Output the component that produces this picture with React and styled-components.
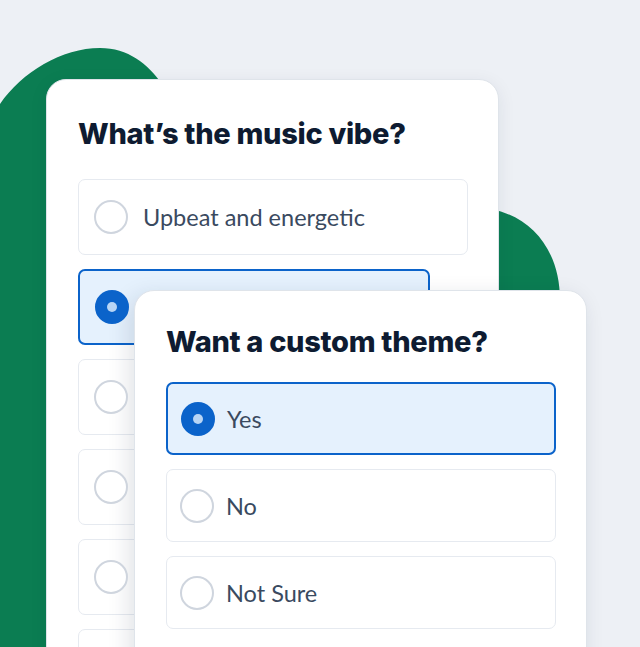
import React from "react";
import styled, { createGlobalStyle } from "styled-components";

const GlobalStyle = createGlobalStyle`
  body {
    margin: 0;
    background: #edf0f5;
  }
`;

const vibeOptions = [
  { label: "Upbeat and energetic" },
  { label: "Chill and relaxed", selected: true, narrow: true },
  { label: "Romantic and soft" },
  { label: "Classic hits" },
  { label: "Party all night" },
  { label: "Something else" },
];

const themeOptions = [
  { label: "Yes", selected: true },
  { label: "No" },
  { label: "Not Sure" },
];

const App = () => (
  <>
    <GlobalStyle />
    <Stage>
      <Blob viewBox="0 0 640 647" aria-hidden="true">
        <path d="M0 104 C22 72 62 48 100 48 C128 48 148 64 162 84 L470 207 C525 207 560 245 560 300 L560 647 L0 647 Z" />
      </Blob>
      <Stack>
        <Card $top={79} $left={46} $padTop={37}>
          <Title>What’s the music vibe?</Title>
          <Options $mt={28}>
            {vibeOptions.map((opt) => (
              <Option key={opt.label} $selected={opt.selected} $narrow={opt.narrow} $h={76} $pad={15} $gap={15}>
                <Radio $selected={opt.selected} />
                <Label>{opt.label}</Label>
              </Option>
            ))}
          </Options>
        </Card>
        <Card $top={290} $left={134} $padTop={34} $front>
          <Title>Want a custom theme?</Title>
          <Options $mt={23}>
            {themeOptions.map((opt) => (
              <Option key={opt.label} $selected={opt.selected} $h={73} $pad={13} $gap={12}>
                <Radio $selected={opt.selected} />
                <Label>{opt.label}</Label>
              </Option>
            ))}
          </Options>
        </Card>
      </Stack>
    </Stage>
  </>
);

const Stage = styled.div`
  position: relative;
  width: 640px;
  height: 647px;
  overflow: hidden;
  background: #edf0f5;
`;

const Blob = styled.svg`
  position: absolute;
  inset: 0;
  width: 640px;
  height: 647px;
  fill: #0b7d52;
`;

const Stack = styled.div`
  position: relative;
  display: grid;
  grid-template-areas: "stack";
`;

const Card = styled.div`
  grid-area: stack;
  box-sizing: border-box;
  width: 453px;
  min-height: 600px;
  margin: ${(p) => p.$top}px 0 0 ${(p) => p.$left}px;
  padding: ${(p) => p.$padTop}px 30px 0 31px;
  background: #fff;
  border: 1px solid #dfe4ea;
  border-radius: 20px;
  box-shadow: ${(p) =>
    p.$front
      ? "-5px 6px 22px rgba(20, 35, 65, 0.13)"
      : "0 4px 18px rgba(20, 35, 65, 0.08)"};
`;

const Title = styled.h2`
  margin: 0;
  font-family: Inter, "Liberation Sans", sans-serif;
  font-weight: 800;
  font-size: 29px;
  line-height: 34px;
  letter-spacing: -0.3px;
  color: #0e1b31;
  white-space: nowrap;
`;

const Options = styled.div`
  display: flex;
  flex-direction: column;
  gap: 14px;
  margin-top: ${(p) => p.$mt}px;
`;

const Option = styled.div`
  box-sizing: border-box;
  display: flex;
  align-items: center;
  gap: ${(p) => p.$gap}px;
  width: ${(p) => (p.$narrow ? "352px" : "100%")};
  height: ${(p) => p.$h}px;
  padding: 0 ${(p) => p.$pad}px;
  border-radius: 7px;
  background: ${(p) => (p.$selected ? "#e5f1fd" : "#fff")};
  border: ${(p) => (p.$selected ? "2px solid #0b63ca" : "1.5px solid #e6eaf0")};
`;

const Radio = styled.span`
  position: relative;
  flex: none;
  box-sizing: border-box;
  width: 34px;
  height: 34px;
  border-radius: 50%;
  background: ${(p) => (p.$selected ? "#0b63ca" : "#fff")};
  border: 2px solid ${(p) => (p.$selected ? "#0b63ca" : "#cfd5de")};

  &::after {
    content: "";
    display: ${(p) => (p.$selected ? "block" : "none")};
    position: absolute;
    left: 50%;
    top: 50%;
    width: 10px;
    height: 10px;
    margin: -5px 0 0 -5px;
    border-radius: 50%;
    background: #b8d5f5;
  }
`;

const Label = styled.span`
  font-family: Lato, "Liberation Sans", sans-serif;
  font-size: 23.5px;
  color: #3a4a5f;
  white-space: nowrap;
`;

export default App;
